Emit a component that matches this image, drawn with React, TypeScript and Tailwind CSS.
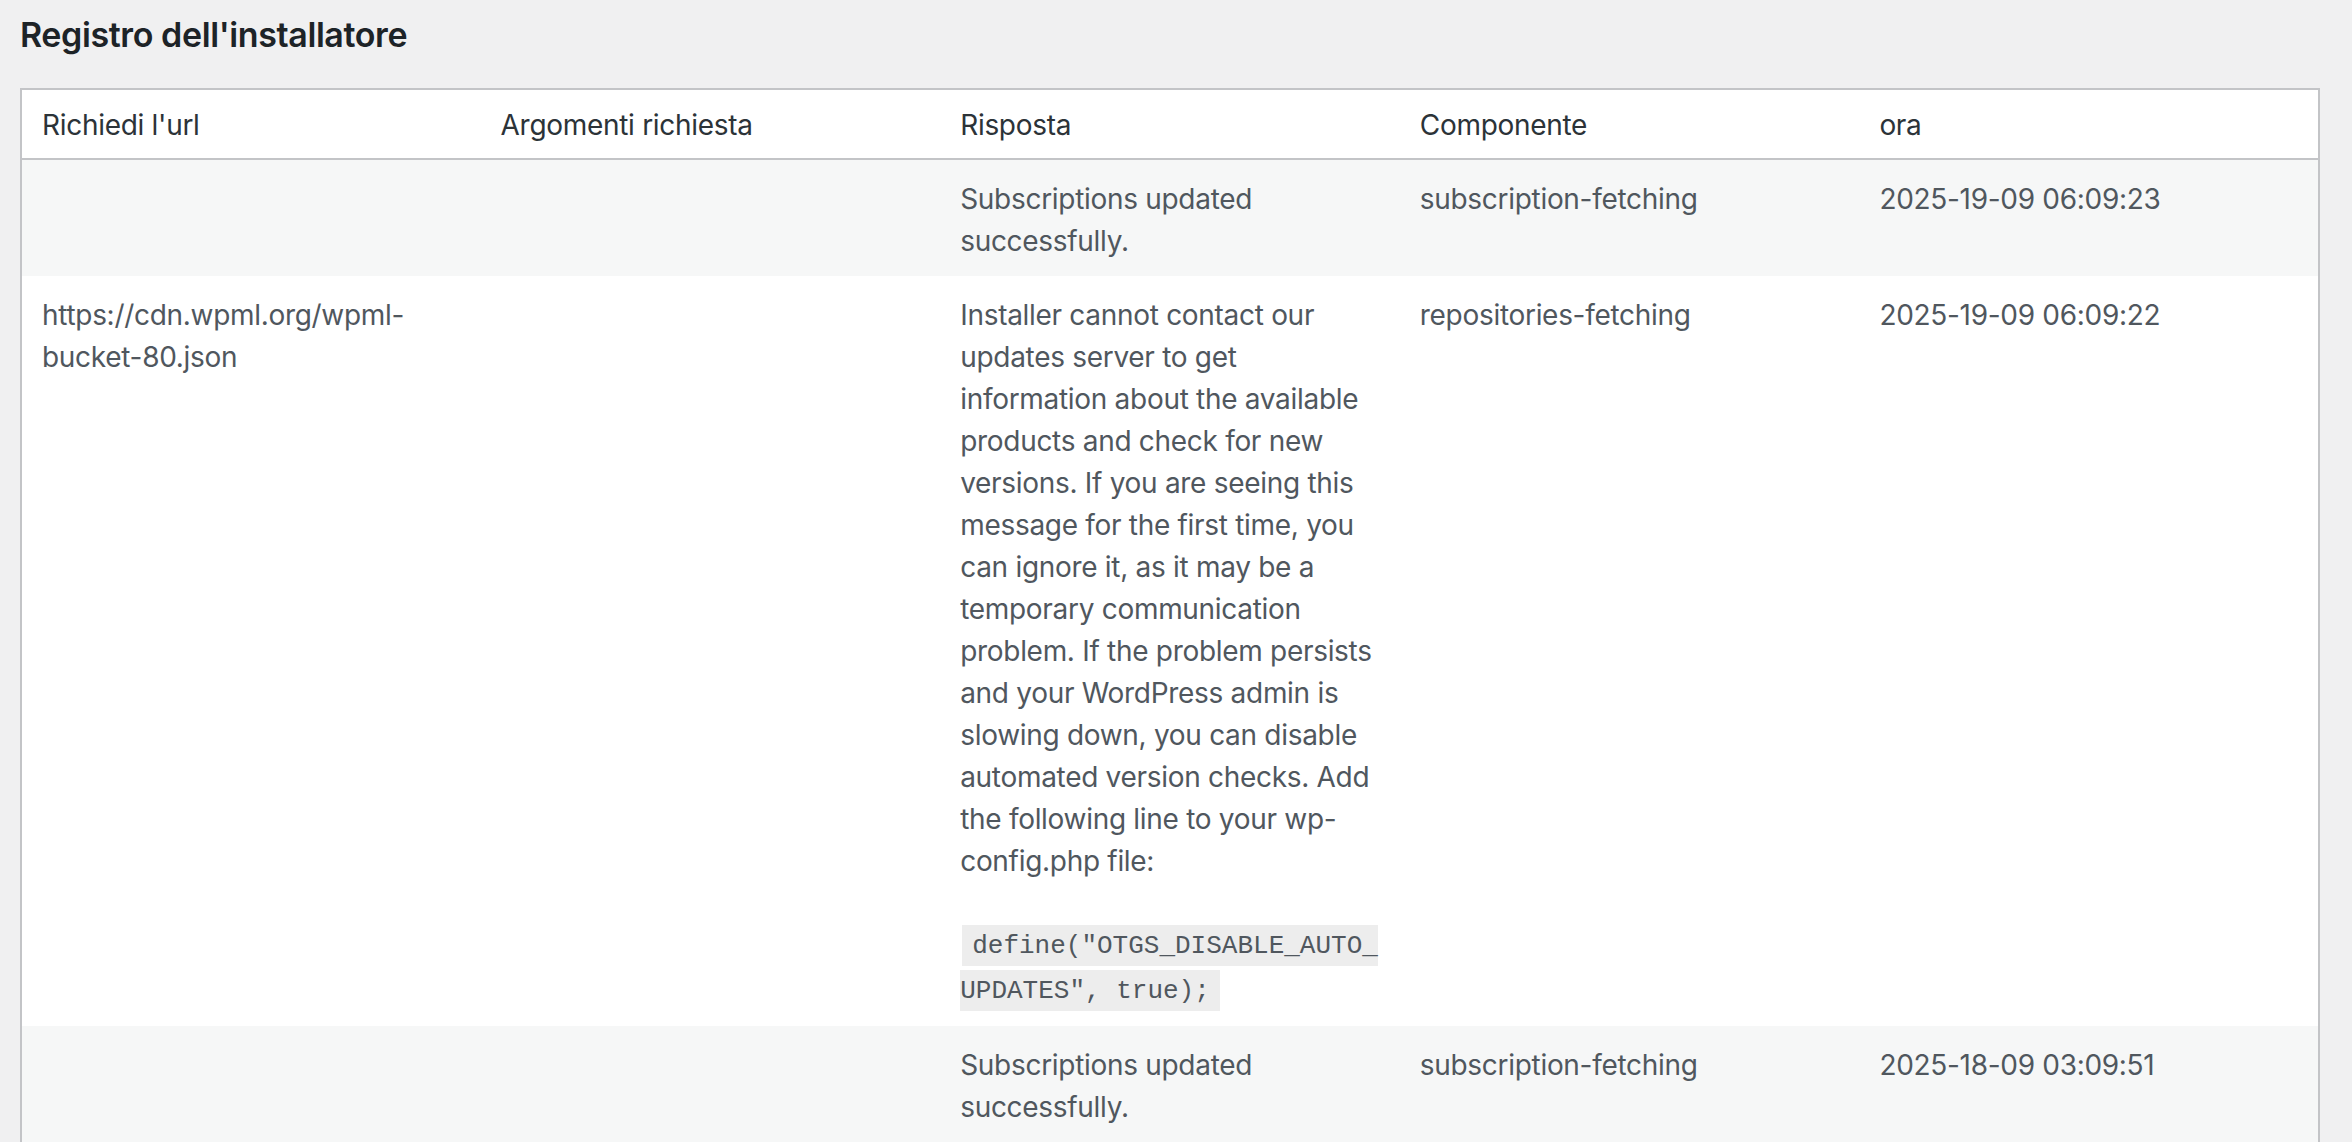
import React from "react";

const rows = [
  {
    url: [] as string[],
    args: "",
    resp: ["Subscriptions updated", "successfully."],
    code: null as null | string[],
    comp: "subscription-fetching",
    time: "2025-19-09 06:09:23",
    alt: true,
  },
  {
    url: ["https://cdn.wpml.org/wpml-", "bucket-80.json"],
    args: "",
    resp: [
      "Installer cannot contact our",
      "updates server to get",
      "information about the available",
      "products and check for new",
      "versions. If you are seeing this",
      "message for the first time, you",
      "can ignore it, as it may be a",
      "temporary communication",
      "problem. If the problem persists",
      "and your WordPress admin is",
      "slowing down, you can disable",
      "automated version checks. Add",
      "the following line to your wp-",
      "config.php file:",
    ],
    code: ['define("OTGS_DISABLE_AUTO_', 'UPDATES", true);'],
    comp: "repositories-fetching",
    time: "2025-19-09 06:09:22",
    alt: false,
  },
  {
    url: [],
    args: "",
    resp: ["Subscriptions updated", "successfully."],
    code: null,
    comp: "subscription-fetching",
    time: "2025-18-09 03:09:51",
    alt: true,
  },
];

function Lines({ lines }: { lines: string[] }) {
  return (
    <>
      {lines.map((l, i) => (
        <React.Fragment key={i}>
          {l}
          {i < lines.length - 1 && <br />}
        </React.Fragment>
      ))}
    </>
  );
}

const td =
  "align-top px-[20px] pt-[18px] pb-[14px] text-[28px] leading-[42px] text-[#50575e] tracking-[-0.3px] whitespace-nowrap";

export default function App() {
  return (
    <div className="min-h-[1142px] bg-[#f0f0f1] font-[Inter,'Liberation_Sans',sans-serif] pt-[13px] pl-[20px] pr-[32px]">
      <h2 className="text-[34px] leading-[44px] font-semibold text-[#1d2327] mb-[31px] tracking-[-0.4px]">
        Registro dell'installatore
      </h2>
      <table className="w-full table-fixed border-collapse border-2 border-[#c3c4c7] bg-white">
        <thead>
          <tr className="border-b-2 border-[#c3c4c7]">
            {["Richiedi l'url", "Argomenti richiesta", "Risposta", "Componente", "ora"].map((h) => (
              <th
                key={h}
                className="text-left font-normal text-[28px] leading-[36px] text-[#2c3338] tracking-[-0.3px] px-[20px] pt-[17px] pb-[15px]"
              >
                {h}
              </th>
            ))}
          </tr>
        </thead>
        <tbody>
          {rows.map((r, i) => (
            <tr key={i} className={r.alt ? "bg-[#f6f7f7]" : "bg-white"}>
              <td className={td}>
                <Lines lines={r.url} />
              </td>
              <td className={td}>{r.args}</td>
              <td className={td}>
                <Lines lines={r.resp} />
                {r.code && (
                  <div className="mt-[40px] leading-[42px]">
                    <code className="bg-[rgba(0,0,0,0.07)] px-[10px] pt-[6px] pb-[5px] mx-[2px] font-['Liberation_Mono',monospace] text-[26px] tracking-normal text-[#50575e]">
                      <Lines lines={r.code} />
                    </code>
                  </div>
                )}
              </td>
              <td className={td}>{r.comp}</td>
              <td className={td}>{r.time}</td>
            </tr>
          ))}
        </tbody>
      </table>
    </div>
  );
}
